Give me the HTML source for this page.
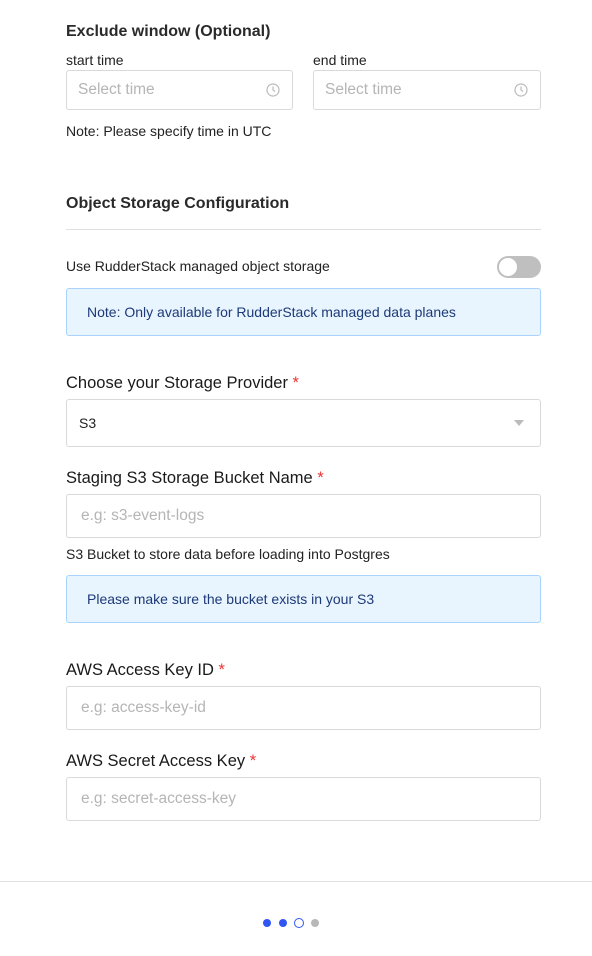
<!DOCTYPE html>
<html><head><meta charset="utf-8"><style>
*{box-sizing:border-box;margin:0;padding:0}
body{width:592px;height:956px;background:#fff;font-family:"Liberation Sans",sans-serif;color:#1a1a1a;position:relative;overflow:hidden}
.a{position:absolute;white-space:nowrap}
.h{font-size:16px;font-weight:bold;color:#2a2a2a}
.l{font-size:16.5px;color:#1a1a1a}
.s{font-size:14px;color:#222}
.in{position:absolute;border:1px solid #d9d9d9;border-radius:3px;background:#fff;font-size:15.5px;color:#b5b5b5;padding-left:14px;display:flex;align-items:center}
.note{position:absolute;left:66px;width:475px;background:#e8f4fe;border:1px solid #a9d3fb;border-radius:3px;color:#1d3a78;font-size:14px;padding-left:20px;display:flex;align-items:center}
.r{color:#e33}
</style></head><body>
<div class="a h" style="left:66px;top:23px">Exclude window (Optional)</div>
<div class="a s" style="left:66px;top:52px">start time</div>
<div class="a s" style="left:313px;top:52px">end time</div>
<div class="in" style="left:66px;top:70px;width:227px;height:40px;padding-left:11px">Select time
<svg style="position:absolute;right:12px;top:12px" width="14" height="14" viewBox="0 0 14 14"><circle cx="7" cy="7" r="6" fill="none" stroke="#bbb" stroke-width="1.2"/><path d="M7 3.5V7l2 1.5" fill="none" stroke="#bbb" stroke-width="1.2"/></svg></div>
<div class="in" style="left:313px;top:70px;width:228px;height:40px;padding-left:11px">Select time
<svg style="position:absolute;right:12px;top:12px" width="14" height="14" viewBox="0 0 14 14"><circle cx="7" cy="7" r="6" fill="none" stroke="#bbb" stroke-width="1.2"/><path d="M7 3.5V7l2 1.5" fill="none" stroke="#bbb" stroke-width="1.2"/></svg></div>
<div class="a s" style="left:66px;top:123px">Note: Please specify time in UTC</div>
<div class="a h" style="left:66px;top:195px">Object Storage Configuration</div>
<div class="a" style="left:66px;top:229px;width:475px;height:1px;background:#e0e0e0"></div>
<div class="a s" style="left:66px;top:258px">Use RudderStack managed object storage</div>
<div class="a" style="left:497px;top:256px;width:44px;height:22px;border-radius:11px;background:#bfbfbf"><div style="position:absolute;left:2px;top:2px;width:18px;height:18px;border-radius:50%;background:#fff"></div></div>
<div class="note" style="top:288px;height:48px">Note: Only available for RudderStack managed data planes</div>
<div class="a l" style="left:66px;top:374px">Choose your Storage Provider <span class="r">*</span></div>
<div class="in" style="left:66px;top:399px;width:475px;height:48px;color:#222;font-size:14px;padding-left:12px">S3
<svg style="position:absolute;right:16px;top:20px" width="10" height="6" viewBox="0 0 10 6"><path d="M0 0h10L5 6z" fill="#bbb"/></svg></div>
<div class="a l" style="left:66px;top:469px">Staging S3 Storage Bucket Name <span class="r">*</span></div>
<div class="in" style="left:66px;top:494px;width:475px;height:44px">e.g: s3-event-logs</div>
<div class="a s" style="left:66px;top:546px">S3 Bucket to store data before loading into Postgres</div>
<div class="note" style="top:575px;height:48px">Please make sure the bucket exists in your S3</div>
<div class="a l" style="left:66px;top:661px">AWS Access Key ID <span class="r">*</span></div>
<div class="in" style="left:66px;top:686px;width:475px;height:44px">e.g: access-key-id</div>
<div class="a l" style="left:66px;top:752px">AWS Secret Access Key <span class="r">*</span></div>
<div class="in" style="left:66px;top:777px;width:475px;height:44px">e.g: secret-access-key</div>
<div class="a" style="left:0;top:881px;width:592px;height:1px;background:#e0e0e0"></div>
<div class="a" style="left:263px;top:919px;width:8px;height:8px;border-radius:50%;background:#2f55f5"></div>
<div class="a" style="left:279px;top:919px;width:8px;height:8px;border-radius:50%;background:#2f55f5"></div>
<div class="a" style="left:294px;top:918px;width:10px;height:10px;border-radius:50%;border:1.5px solid #2f55f5"></div>
<div class="a" style="left:311px;top:919px;width:8px;height:8px;border-radius:50%;background:#b8b8b8"></div>
</body></html>
